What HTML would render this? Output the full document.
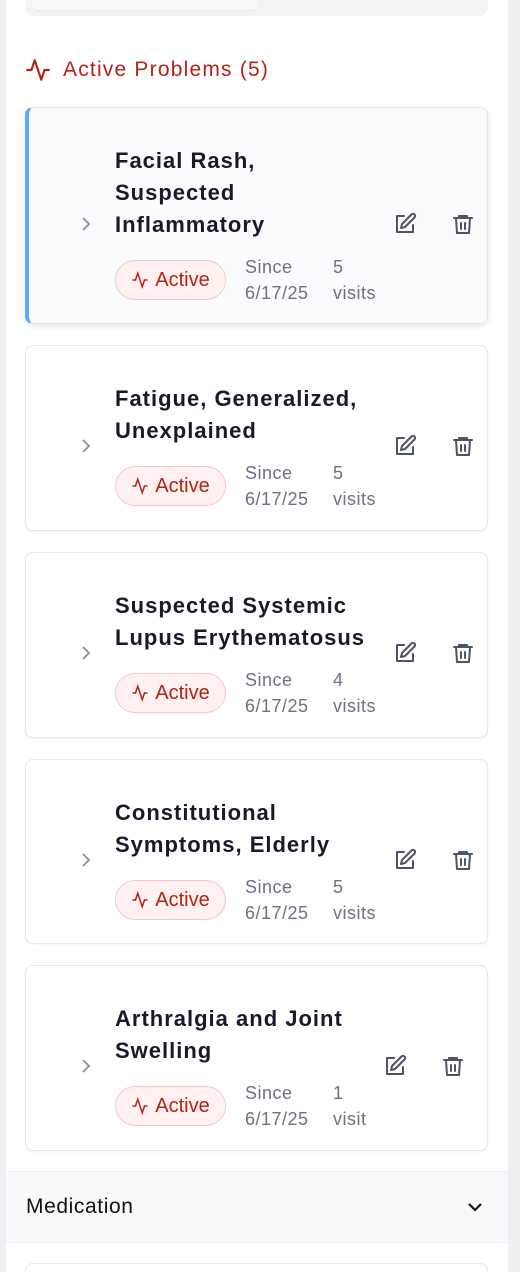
<!DOCTYPE html>
<html><head><meta charset="utf-8"><style>
*{box-sizing:border-box;margin:0;padding:0}
html,body{width:520px;height:1272px;overflow:hidden}
body{background:#eeeff2;font-family:"Liberation Sans",sans-serif;position:relative}
.panel{position:absolute;left:6px;top:0;width:502px;height:1272px;background:#fff}
.topbar{position:absolute;left:25px;top:-10px;width:463px;height:26px;background:#f3f4f6;border-radius:8px}
.topbar i{position:absolute;left:7px;top:0;width:226px;height:20px;background:#fafafa;border-radius:6px;box-shadow:0 1px 1px rgba(0,0,0,.05)}
.hdr{position:absolute;left:25px;top:57px;color:#b42318;font-size:21px;letter-spacing:1.2px;display:flex;align-items:center;gap:12px}
.card{position:absolute;left:25px;width:463px;border:1px solid #e5e7eb;border-radius:8px;background:#fff;padding:37px 0 23px;box-shadow:0 1px 2px rgba(0,0,0,.05)}
.card.sel{background:#fafbfc;border-left:4px solid #60a5fa;box-shadow:0 2px 6px rgba(0,0,0,.1)}
.chev{position:absolute;left:48px;top:calc(50% - 4px)}
.card.sel .chev{left:45px}
.body{margin-left:89px;width:290px}
.card.sel .body{margin-left:86px}
.t{font-size:22px;font-weight:bold;color:#151b2b;line-height:32px;letter-spacing:1px}
.meta{display:flex;margin-top:13px;align-items:center}
.badge{width:111px;height:40px;border:1px solid #f8c9c4;background:#fef1f0;border-radius:20px;color:#b42318;font-size:20px;display:flex;align-items:center;justify-content:center;gap:6px}
.m{font-size:18px;color:#6b7280;line-height:26px;letter-spacing:.5px}
.since{margin-left:19px;width:88px}
.ic{position:absolute;top:calc(50% - 4px)}
.med{position:absolute;left:6px;top:1171px;width:502px;height:72px;background:#f8f9fb;border-top:1px solid #eef0f3;border-bottom:1px solid #eef0f3;display:flex;align-items:center;padding-left:20px;font-size:21px;color:#111;letter-spacing:.6px}
</style></head><body>
<div class="panel"></div>
<div class="topbar"><i></i></div>
<div class="hdr"><svg width="26" height="26" viewBox="0 0 24 24" fill="none" stroke="#b42318" stroke-width="2" stroke-linecap="round" stroke-linejoin="round"><path d="M22 12h-4l-3 9L9 3l-3 9H2"/></svg>Active Problems (5)</div>

<div class="card sel" style="top:107px;height:217px"><svg class="chev" width="24" height="24" viewBox="0 0 24 24" fill="none" stroke="#8b9099" stroke-width="1.8"><path d="M9 6l6 6-6 6"/></svg><div class="body"><div class="t">Facial Rash,<br>Suspected<br>Inflammatory</div><div class="meta"><div class="badge"><svg width="18" height="18" viewBox="0 0 24 24" fill="none" stroke="#b42318" stroke-width="2"><path d="M22 12h-4l-3 9L9 3l-3 9H2"/></svg>Active</div><div class="m since">Since<br>6/17/25</div><div class="m">5<br>visits</div></div></div>
<svg class="ic" style="left:364px" width="24" height="24" viewBox="0 0 24 24" fill="none" stroke="#4b5563" stroke-width="2" stroke-linecap="round" stroke-linejoin="round"><path d="M11 4H4v16h16v-7"/><path d="M18.5 2.5a2.1 2.1 0 013 3L12 15l-4 1 1-4z"/></svg>
<svg class="ic" style="left:422px" width="24" height="24" viewBox="0 0 24 24" fill="none" stroke="#4b5563" stroke-width="2" stroke-linecap="round" stroke-linejoin="round"><path d="M3 6h18M8 6V4h8v2M5 6l1 15h12l1-15M10 11v6M14 11v6"/></svg></div>

<div class="card" style="top:345px;height:186px"><svg class="chev" width="24" height="24" viewBox="0 0 24 24" fill="none" stroke="#8b9099" stroke-width="1.8"><path d="M9 6l6 6-6 6"/></svg><div class="body"><div class="t">Fatigue, Generalized,<br>Unexplained</div><div class="meta"><div class="badge"><svg width="18" height="18" viewBox="0 0 24 24" fill="none" stroke="#b42318" stroke-width="2"><path d="M22 12h-4l-3 9L9 3l-3 9H2"/></svg>Active</div><div class="m since">Since<br>6/17/25</div><div class="m">5<br>visits</div></div></div>
<svg class="ic" style="left:367px" width="24" height="24" viewBox="0 0 24 24" fill="none" stroke="#4b5563" stroke-width="2" stroke-linecap="round" stroke-linejoin="round"><path d="M11 4H4v16h16v-7"/><path d="M18.5 2.5a2.1 2.1 0 013 3L12 15l-4 1 1-4z"/></svg>
<svg class="ic" style="left:425px" width="24" height="24" viewBox="0 0 24 24" fill="none" stroke="#4b5563" stroke-width="2" stroke-linecap="round" stroke-linejoin="round"><path d="M3 6h18M8 6V4h8v2M5 6l1 15h12l1-15M10 11v6M14 11v6"/></svg></div>

<div class="card" style="top:552px;height:186px"><svg class="chev" width="24" height="24" viewBox="0 0 24 24" fill="none" stroke="#8b9099" stroke-width="1.8"><path d="M9 6l6 6-6 6"/></svg><div class="body"><div class="t">Suspected Systemic<br>Lupus Erythematosus</div><div class="meta"><div class="badge"><svg width="18" height="18" viewBox="0 0 24 24" fill="none" stroke="#b42318" stroke-width="2"><path d="M22 12h-4l-3 9L9 3l-3 9H2"/></svg>Active</div><div class="m since">Since<br>6/17/25</div><div class="m">4<br>visits</div></div></div>
<svg class="ic" style="left:367px" width="24" height="24" viewBox="0 0 24 24" fill="none" stroke="#4b5563" stroke-width="2" stroke-linecap="round" stroke-linejoin="round"><path d="M11 4H4v16h16v-7"/><path d="M18.5 2.5a2.1 2.1 0 013 3L12 15l-4 1 1-4z"/></svg>
<svg class="ic" style="left:425px" width="24" height="24" viewBox="0 0 24 24" fill="none" stroke="#4b5563" stroke-width="2" stroke-linecap="round" stroke-linejoin="round"><path d="M3 6h18M8 6V4h8v2M5 6l1 15h12l1-15M10 11v6M14 11v6"/></svg></div>

<div class="card" style="top:759px;height:185px"><svg class="chev" width="24" height="24" viewBox="0 0 24 24" fill="none" stroke="#8b9099" stroke-width="1.8"><path d="M9 6l6 6-6 6"/></svg><div class="body"><div class="t">Constitutional<br>Symptoms, Elderly</div><div class="meta"><div class="badge"><svg width="18" height="18" viewBox="0 0 24 24" fill="none" stroke="#b42318" stroke-width="2"><path d="M22 12h-4l-3 9L9 3l-3 9H2"/></svg>Active</div><div class="m since">Since<br>6/17/25</div><div class="m">5<br>visits</div></div></div>
<svg class="ic" style="left:367px" width="24" height="24" viewBox="0 0 24 24" fill="none" stroke="#4b5563" stroke-width="2" stroke-linecap="round" stroke-linejoin="round"><path d="M11 4H4v16h16v-7"/><path d="M18.5 2.5a2.1 2.1 0 013 3L12 15l-4 1 1-4z"/></svg>
<svg class="ic" style="left:425px" width="24" height="24" viewBox="0 0 24 24" fill="none" stroke="#4b5563" stroke-width="2" stroke-linecap="round" stroke-linejoin="round"><path d="M3 6h18M8 6V4h8v2M5 6l1 15h12l1-15M10 11v6M14 11v6"/></svg></div>

<div class="card" style="top:965px;height:186px"><svg class="chev" width="24" height="24" viewBox="0 0 24 24" fill="none" stroke="#8b9099" stroke-width="1.8"><path d="M9 6l6 6-6 6"/></svg><div class="body"><div class="t">Arthralgia and Joint<br>Swelling</div><div class="meta"><div class="badge"><svg width="18" height="18" viewBox="0 0 24 24" fill="none" stroke="#b42318" stroke-width="2"><path d="M22 12h-4l-3 9L9 3l-3 9H2"/></svg>Active</div><div class="m since">Since<br>6/17/25</div><div class="m">1<br>visit</div></div></div>
<svg class="ic" style="left:357px" width="24" height="24" viewBox="0 0 24 24" fill="none" stroke="#4b5563" stroke-width="2" stroke-linecap="round" stroke-linejoin="round"><path d="M11 4H4v16h16v-7"/><path d="M18.5 2.5a2.1 2.1 0 013 3L12 15l-4 1 1-4z"/></svg>
<svg class="ic" style="left:415px" width="24" height="24" viewBox="0 0 24 24" fill="none" stroke="#4b5563" stroke-width="2" stroke-linecap="round" stroke-linejoin="round"><path d="M3 6h18M8 6V4h8v2M5 6l1 15h12l1-15M10 11v6M14 11v6"/></svg></div>

<div class="med">Medication<svg style="position:absolute;left:457px;top:23px" width="24" height="24" viewBox="0 0 24 24" fill="none" stroke="#111" stroke-width="2.2"><path d="M6 9l6 6 6-6"/></svg></div>
<div class="card" style="top:1263px;height:40px;padding:0"></div>
</body></html>
